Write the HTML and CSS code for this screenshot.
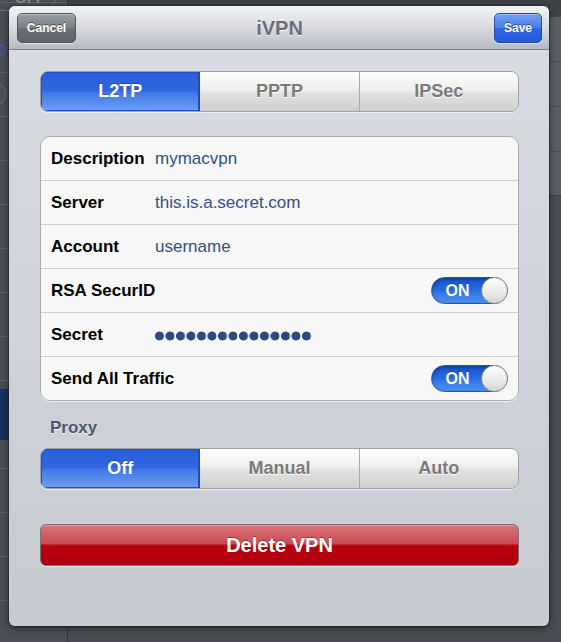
FILE: index.html
```html
<!DOCTYPE html>
<html lang="en">
<head>
<meta charset="utf-8">
<title>iVPN</title>
<link rel="stylesheet" href="styles.css">
</head>
<body>
<div class="backdrop">
  <div class="master">
    <div class="ghost-row first"><span class="ghost-switch">OFF</span></div>
    <div class="ghost-row"><span class="ghost-ring"></span></div>
    <div class="ghost-row"><span class="ghost-knob"></span></div>
    <div class="master-fill"></div>
    <div class="master-selected"></div>
    <div class="master-rest"></div>
  </div>
  <div class="detail">
    <div class="detail-top"></div>
    <div class="detail-group">
      <div class="detail-row"></div>
      <div class="detail-row"></div>
      <div class="detail-row"></div>
      <div class="detail-row"></div>
    </div>
  </div>
</div>

<div class="modal">
  <header class="nav">
    <div class="nav-left"><button class="btn btn-cancel">Cancel</button></div>
    <h1 class="title">iVPN</h1>
    <div class="nav-right"><button class="btn btn-save">Save</button></div>
  </header>
  <div class="content">
    <div class="seg">
      <span class="seg-item active">L2TP</span>
      <span class="seg-item">PPTP</span>
      <span class="seg-item">IPSec</span>
    </div>

    <div class="group">
      <div class="row"><span class="label">Description</span><span class="value">mymacvpn</span></div>
      <div class="row"><span class="label">Server</span><span class="value">this.is.a.secret.com</span></div>
      <div class="row"><span class="label">Account</span><span class="value">username</span></div>
      <div class="row"><span class="label">RSA SecurID</span><span class="switch"><span class="switch-text">ON</span><span class="knob"></span></span></div>
      <div class="row"><span class="label">Secret</span><span class="dots" aria-label="secret"></span></div>
      <div class="row"><span class="label">Send All Traffic</span><span class="switch"><span class="switch-text">ON</span><span class="knob"></span></span></div>
    </div>

    <div class="section-label">Proxy</div>
    <div class="seg">
      <span class="seg-item active">Off</span>
      <span class="seg-item">Manual</span>
      <span class="seg-item">Auto</span>
    </div>

    <button class="delete">Delete VPN</button>
  </div>
</div>
</body>
</html>
```

FILE: styles.css
```css
* { box-sizing: border-box; }
html, body { margin: 0; padding: 0; }
body {
  width: 561px;
  height: 642px;
  overflow: hidden;
  position: relative;
  background: #4a4d53;
  font-family: "Liberation Sans", Arial, Helvetica, sans-serif;
}

/* ---------- backdrop (underlying split view) ---------- */
.backdrop { display: flex; height: 642px; }
.master {
  width: 68px;
  flex: none;
  border-right: 1px solid #34363b;
  display: flex;
  flex-direction: column;
  overflow: hidden;
  background-color: #4c4f56;
  background-image: repeating-linear-gradient(180deg, transparent 0 43px, #5f626a 43px 44px);
  background-position: 0 29px;
}
.ghost-row {
  height: 44px;
  flex: none;
  display: flex;
  align-items: center;
}
.ghost-row.first { height: 28px; align-items: flex-start; }
.ghost-switch {
  display: block;
  margin: -16px 0 0 -20px;
  width: 76px;
  height: 27px;
  border: 1px solid #73767c;
  border-radius: 14px;
  color: #8a8d93;
  font-weight: bold;
  font-size: 15px;
  line-height: 25px;
  padding-left: 34px;
}
.ghost-ring {
  display: block;
  width: 12px; height: 12px;
  border-radius: 50%;
  border: 2px solid #3a5da8;
  margin-left: -6px;
}
.ghost-knob {
  display: block;
  width: 26px; height: 26px;
  border-radius: 50%;
  border: 1px solid #6b6e74;
  margin-left: -20px;
}
.master-fill { height: 273px; flex: none; }
.master-selected { height: 51px; flex: none; background: #1a3161; }
.master-rest { flex: 1; }

.detail { flex: 1; display: flex; flex-direction: column; }
.detail-top { height: 17px; background: #3f4247; }
.detail-group { background: #5b5e64; border-bottom: 1px solid #3d4045; }
.detail-row { height: 45px; border-bottom: 1px solid #4b4e54; }
.detail-row:last-child { border-bottom: none; height: 43px; }

/* ---------- modal ---------- */
.modal {
  position: absolute;
  left: 9px;
  top: 6px;
  width: 540px;
  height: 620px;
  border-radius: 6px;
  overflow: hidden;
  background: linear-gradient(180deg, #d9dce2 0%, #d0d3d9 50%, #c7cad1 100%);
  box-shadow: 0 2px 8px rgba(0,0,0,0.55), 0 0 0 1px rgba(40,42,48,0.5);
}

.nav {
  height: 44px;
  display: grid;
  grid-template-columns: 1fr auto 1fr;
  align-items: center;
  padding: 0 7px 0 8px;
  background: linear-gradient(180deg, #f1f2f5 0%, #dcdee3 45%, #c5c8cf 80%, #b6b9c1 100%);
  border-bottom: 1px solid #7e828a;
}
.nav-left { display: flex; justify-content: flex-start; }
.nav-right { display: flex; justify-content: flex-end; }
.title {
  margin: 0;
  font-size: 20px;
  font-weight: bold;
  color: #6a6f7b;
  text-shadow: 0 1px 0 rgba(255,255,255,0.9);
  line-height: 24px;
}
.btn {
  height: 30px;
  border-radius: 5px;
  font-family: inherit;
  font-size: 12px;
  font-weight: bold;
  color: #fff;
  text-shadow: 0 -1px 0 rgba(0,0,0,0.45);
  padding: 0;
  cursor: pointer;
}
.btn-cancel {
  width: 59px;
  border: 1px solid #50535a;
  background: linear-gradient(180deg, #9a9da4 0%, #7c8088 50%, #6a6e76 52%, #5f636b 100%);
  box-shadow: inset 0 1px 0 rgba(255,255,255,0.35), 0 1px 0 rgba(255,255,255,0.5);
}
.btn-save {
  width: 48px;
  border: 1px solid #2348a8;
  background: linear-gradient(180deg, #729ff4 0%, #4b7deb 50%, #3366e4 52%, #2458de 100%);
  box-shadow: inset 0 1px 0 rgba(255,255,255,0.35), 0 1px 0 rgba(255,255,255,0.5);
}

.content {
  padding: 21px 30px 0 31px;
  display: flex;
  flex-direction: column;
}

/* segmented control */
.seg {
  display: flex;
  height: 41px;
  border: 1px solid #9fa1a6;
  border-radius: 8px;
  overflow: hidden;
  box-shadow: 0 1px 0 rgba(255,255,255,0.6);
}
.seg-item {
  flex: 1;
  display: flex;
  align-items: center;
  justify-content: center;
  font-size: 18px;
  font-weight: bold;
  color: #7a7a7a;
  text-shadow: 0 1px 0 #fff;
  background: linear-gradient(180deg, #fdfdfd 0%, #eeeeee 48%, #e2e2e2 52%, #cfcfcf 100%);
  border-left: 1px solid #a8aaae;
}
.seg-item:first-child { border-left: none; }
.seg-item.active {
  color: #fff;
  text-shadow: 0 -1px 0 rgba(0,0,0,0.3);
  background: linear-gradient(180deg, #2a5fdb 0%, #2f66de 48%, #4077e6 52%, #6e9ff4 100%);
  box-shadow: inset 0 0 0 1px #2050c0;
}
.seg-item.active + .seg-item { border-left-color: #1d48b0; }

/* grouped table */
.group {
  margin-top: 24px;
  background: #f7f7f7;
  border: 1px solid #a9abb0;
  border-radius: 10px;
  box-shadow: 0 1px 0 rgba(255,255,255,0.7);
}
.row {
  height: 44px;
  display: flex;
  align-items: center;
  border-top: 1px solid #cbccd0;
  padding-left: 10px;
}
.row:first-child { border-top: none; height: 43px; }
.label {
  width: 104px;
  flex: none;
  font-size: 17px;
  font-weight: bold;
  color: #000;
  white-space: nowrap;
}
.value {
  font-size: 17px;
  color: #334f85;
}
.dots {
  width: 156px;
  height: 10px;
  margin-top: 2px;
  background-image: radial-gradient(circle at 4.5px 5px, #2d4a80 0 4.2px, transparent 4.8px);
  background-size: 10.5px 10px;
  background-repeat: repeat-x;
}
.switch {
  margin-left: auto;
  margin-right: 10px;
  width: 77px;
  height: 27px;
  border-radius: 14px;
  border: 1px solid #2b55a3;
  background: linear-gradient(180deg, #1552d0 0%, #2a6ae0 50%, #3b80ea 70%, #4a8def 100%);
  box-shadow: inset 0 2px 3px rgba(0,0,0,0.25);
  display: flex;
  align-items: center;
}
.switch-text {
  flex: 1;
  text-align: center;
  font-size: 16px;
  font-weight: bold;
  color: #fff;
  text-shadow: 0 -1px 0 rgba(0,0,0,0.3);
  padding-left: 2px;
}
.knob {
  width: 27px;
  height: 27px;
  margin: -1px -1px -1px 0;
  border-radius: 50%;
  border: 1px solid #8d8f93;
  background: linear-gradient(180deg, #fefefe 0%, #ececec 50%, #d6d6d6 100%);
  flex: none;
}

.section-label {
  margin: 17px 0 10px 10px;
  font-size: 17px;
  line-height: 20px;
  font-weight: bold;
  color: #4c566b;
  text-shadow: 0 1px 0 rgba(255,255,255,0.85);
}

.delete {
  margin-top: 35px;
  height: 42px;
  width: 100%;
  border: 1px solid #7d6e70;
  border-radius: 6px;
  background: linear-gradient(180deg, #da747b 0%, #cb4a53 46%, #b8000f 52%, #b50010 90%, #a8000e 100%);
  box-shadow: inset 0 1px 0 rgba(255,255,255,0.25), 0 1px 0 rgba(255,255,255,0.6);
  font-family: inherit;
  font-size: 20px;
  font-weight: bold;
  color: #fff;
  text-shadow: 0 -1px 0 rgba(0,0,0,0.35);
  padding: 0;
  cursor: pointer;
}
```
